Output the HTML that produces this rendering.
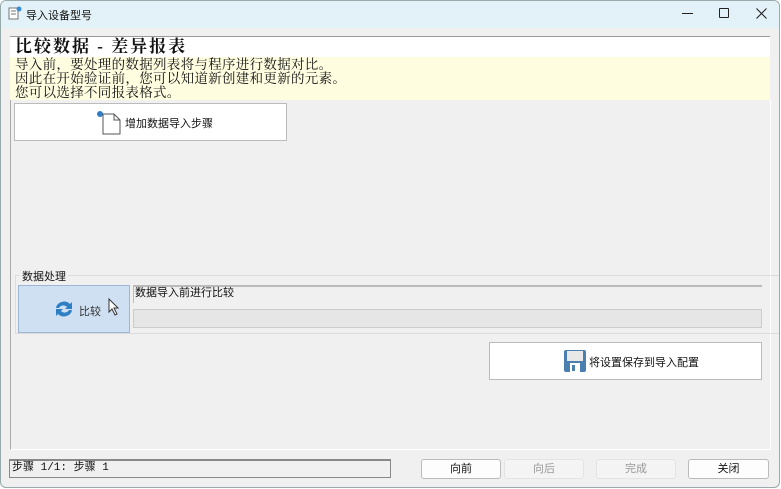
<!DOCTYPE html>
<html><head><meta charset="utf-8"><style>
*{margin:0;padding:0;box-sizing:border-box}
body{width:781px;height:489px;background:#fff;position:relative;overflow:hidden;font-family:"Liberation Sans","Noto Sans CJK SC",sans-serif;font-size:11px;color:#111}
.win{position:absolute;left:0;top:0;width:780px;height:488px;background:#f0f0f0;border:1px solid #9aa;border-radius:6px;overflow:hidden}
.title{position:absolute;left:0;top:0;width:100%;height:27px;background:#e3f1f8}
.abs{position:absolute}
.btn{position:absolute;background:#fdfdfd;border:1px solid #bbb;border-radius:3px;text-align:center;font-size:11px;line-height:20px}
</style></head><body>
<div class="win">
<div class="title">
 <svg class="abs" style="left:7px;top:5px" width="14" height="15"><rect x="1" y="2" width="9" height="11" fill="#fff" stroke="#777"/><line x1="3" y1="5" x2="8" y2="5" stroke="#777"/><line x1="3" y1="8" x2="8" y2="8" stroke="#777"/><circle cx="11" cy="3" r="2.5" fill="#3a8fd0"/></svg>
 <div class="abs" style="left:25px;top:6px;font-size:11px">导入设备型号</div>
 <div class="abs" style="left:681px;top:12px;width:11px;height:1px;background:#222"></div>
 <div class="abs" style="left:718px;top:7px;width:10px;height:10px;border:1.5px solid #222;border-radius:1px"></div>
 <svg class="abs" style="left:755px;top:7px" width="11" height="11"><path d="M0.5 0.5L10.5 10.5M10.5 0.5L0.5 10.5" stroke="#222" stroke-width="1.1"/></svg>
</div>
<div class="abs" style="left:9px;top:35px;width:760px;height:64px;background:#fefde0;border-top:1px solid #999"></div>
<div class="abs" style="left:9px;top:36px;width:760px;height:20px;background:#fff"></div>
<div class="abs" style="left:14px;top:36px;font-family:'Liberation Serif','Noto Serif CJK SC',serif;font-weight:bold;font-size:17px;line-height:20px;letter-spacing:2px;white-space:pre">比较数据 - 差异报表</div>
<div class="abs" style="left:14px;top:57px;font-family:'Liberation Serif','Noto Serif CJK SC',serif;font-size:13.5px;line-height:14px;letter-spacing:0.3px">导入前，要处理的数据列表将与程序进行数据对比。<br>因此在开始验证前，您可以知道新创建和更新的元素。<br>您可以选择不同报表格式。</div>
<div class="abs" style="left:9px;top:99px;width:761px;height:350px;border-bottom:1px solid #fff;border-left:1px solid #aaa;border-right:1px solid #fff"></div>
<div class="btn" style="left:13px;top:102px;width:273px;height:38px;border-radius:0;background:#fff"></div>
<svg class="abs" style="left:95px;top:108px" width="28" height="26"><circle cx="4" cy="5" r="3" fill="#2e7fc4"/><path d="M7 5h11l6 6v14H7z" fill="#fff" stroke="#555"/><path d="M18 5v6h6" fill="none" stroke="#555"/></svg>
<div class="abs" style="left:124px;top:114px">增加数据导入步骤</div>
<div class="abs" style="left:14px;top:274px;width:766px;height:59px;border:1px solid #dcdcdc;border-right:none"></div>
<div class="abs" style="left:19px;top:267px;background:#f0f0f0;padding:0 2px">数据处理</div>
<div class="abs" style="left:17px;top:284px;width:112px;height:48px;background:#cfe0f2;border:1px solid #9cb6d4"></div>
<svg class="abs" style="left:52px;top:298px" width="22" height="20"><path d="M3 9a8 7 0 0 1 14-4l2-2v7h-7l2-2a5 5 0 0 0-8 1z" fill="#2e7fc4"/><path d="M19 11a8 7 0 0 1-14 4l-2 2v-7h7l-2 2a5 5 0 0 0 8-1z" fill="#2e7fc4"/></svg>
<div class="abs" style="left:78px;top:302px;color:#333">比较</div>
<svg class="abs" style="left:107px;top:297px" width="12" height="18"><path d="M1 1v13l3-3 3 6 2-1-3-6h4z" fill="#fff" stroke="#333" stroke-width="1"/></svg>
<div class="abs" style="left:132px;top:284px;width:629px;height:18px;border-top:2px solid #bbb;border-left:1px solid #bbb;background:#f0f0f0;padding-left:1px;line-height:12px">数据导入前进行比较</div>
<div class="abs" style="left:132px;top:308px;width:629px;height:19px;border:1px solid #ccc;background:#e6e6e6"></div>
<div class="btn" style="left:488px;top:341px;width:273px;height:38px;border-radius:0;background:#fff"></div>
<svg class="abs" style="left:562px;top:348px" width="24" height="24"><rect x="1" y="1" width="22" height="22" rx="2" fill="#4a7fb0"/><rect x="4" y="2" width="16" height="10" fill="#e8e8e8"/><rect x="7" y="14" width="10" height="9" fill="#fff"/><rect x="9" y="16" width="3" height="6" fill="#4a7fb0"/></svg>
<div class="abs" style="left:588px;top:353px">将设置保存到导入配置</div>
<div class="abs" style="left:8px;top:458px;width:382px;height:19px;border:1px solid #888;border-top:2px solid #888;background:#f0f0f0;font-family:'Liberation Mono','Noto Sans CJK SC',monospace;font-size:11px;line-height:15px;padding-left:2px">步骤 1/1: 步骤 1</div>
<div class="btn" style="left:420px;top:458px;width:80px;height:20px;line-height:18px">向前</div>
<div class="btn" style="left:503px;top:458px;width:80px;height:20px;line-height:18px;color:#999;background:#f4f4f4;border-color:#e4e4e4">向后</div>
<div class="btn" style="left:595px;top:458px;width:80px;height:20px;line-height:18px;color:#999;background:#f4f4f4;border-color:#e4e4e4">完成</div>
<div class="btn" style="left:687px;top:458px;width:81px;height:20px;line-height:18px">关闭</div>
</div>
</body></html>
